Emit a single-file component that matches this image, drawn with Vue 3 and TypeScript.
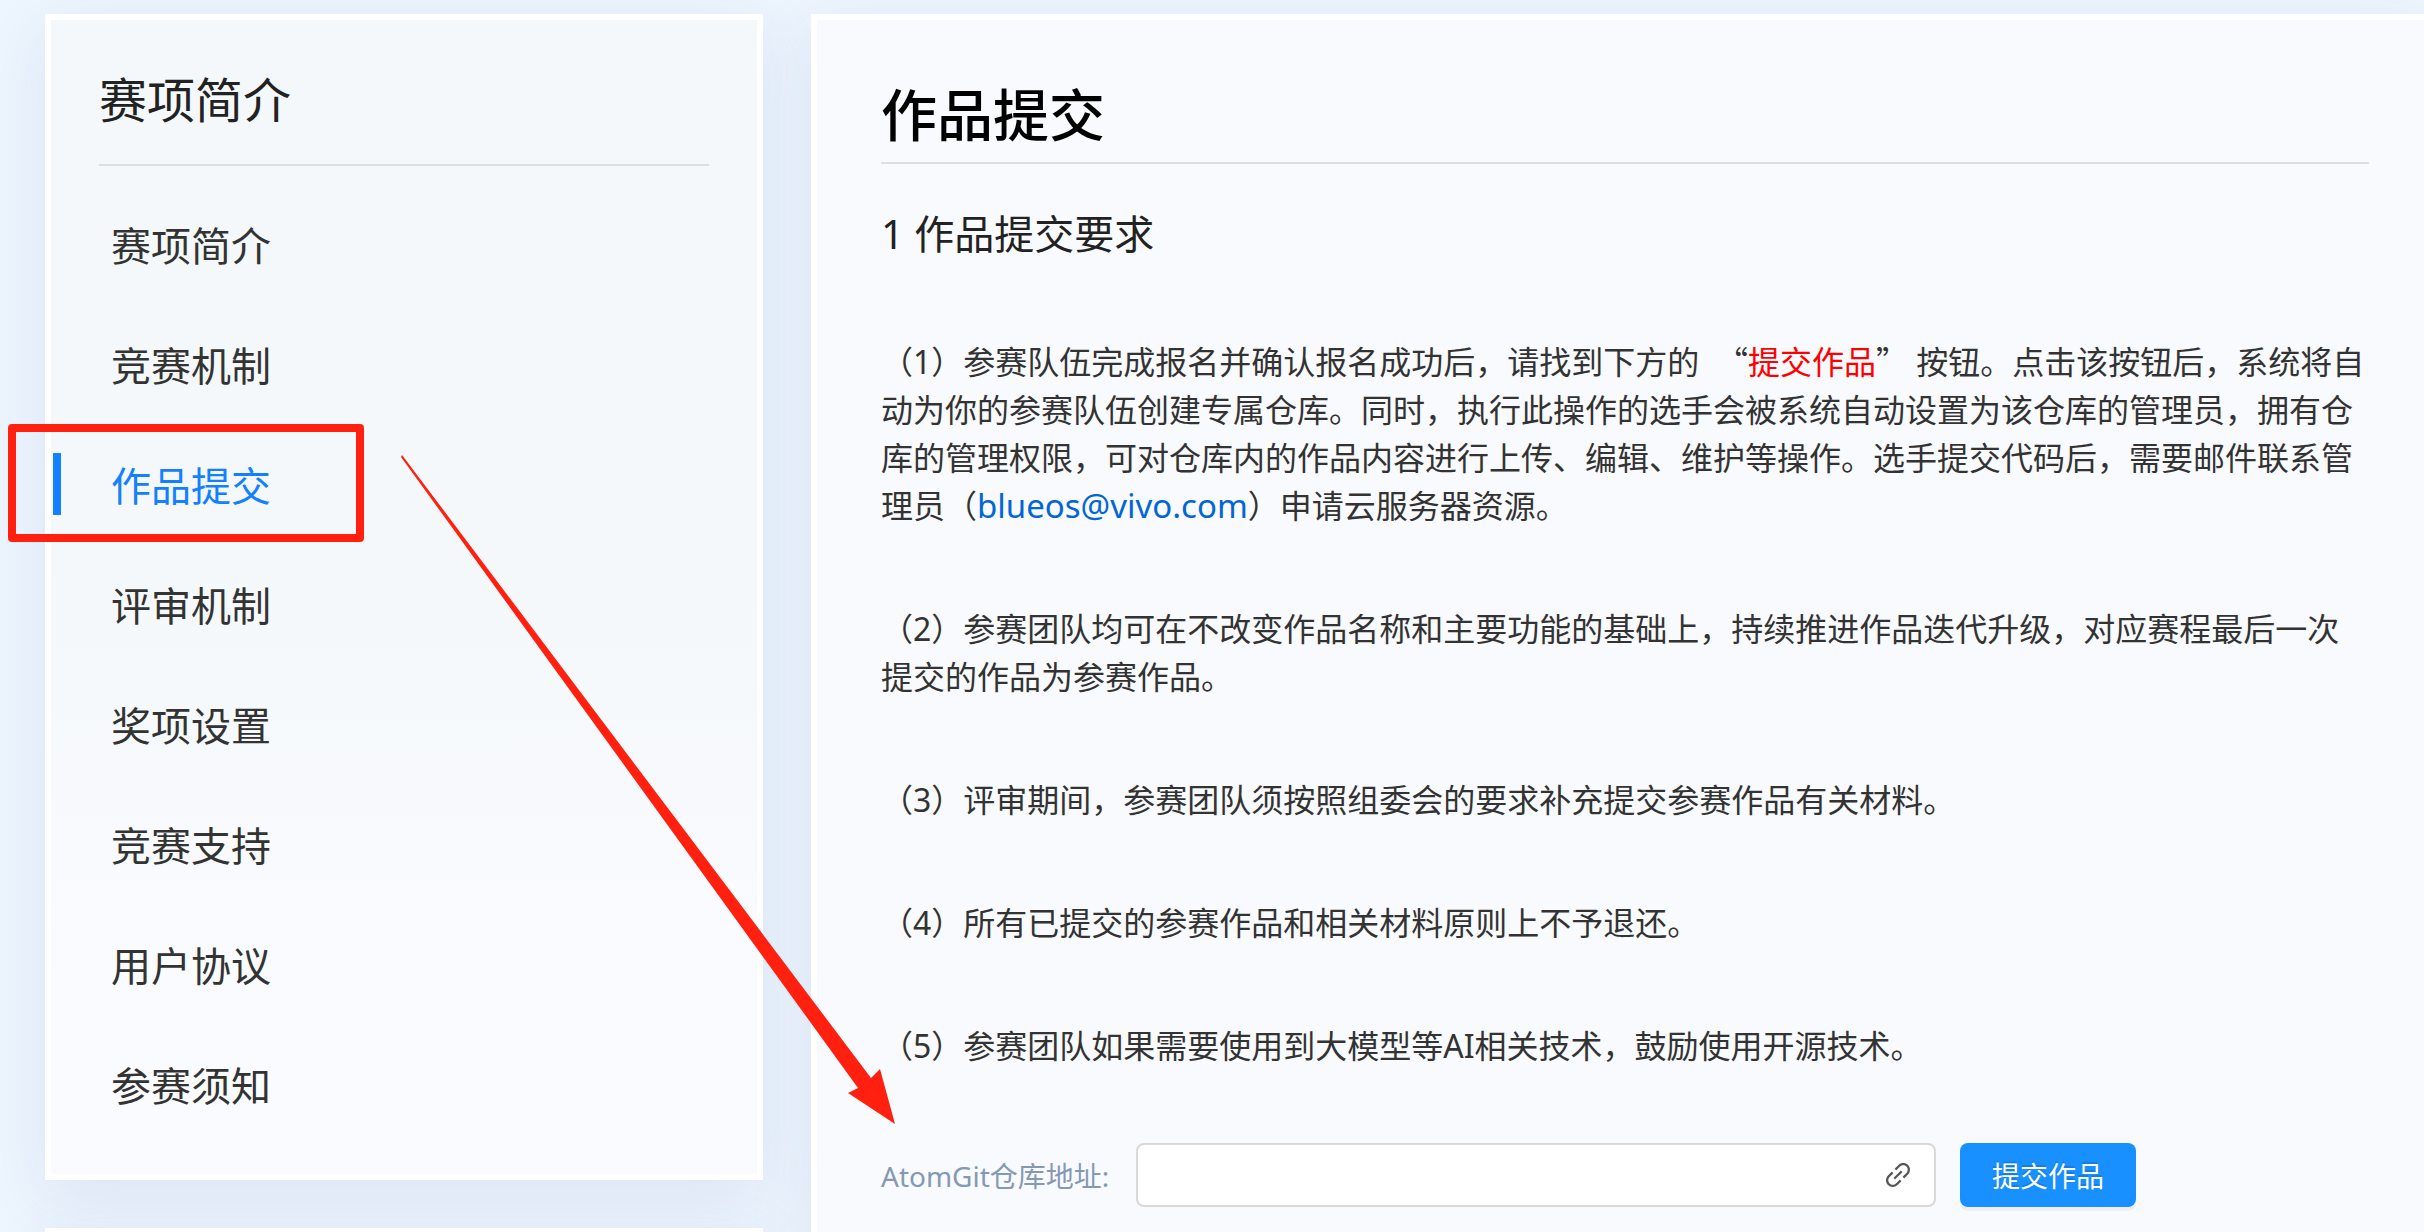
<script setup lang="ts">
import { ref } from 'vue'

const navItems: string[] = [
  '赛项简介',
  '竞赛机制',
  '作品提交',
  '评审机制',
  '奖项设置',
  '竞赛支持',
  '用户协议',
  '参赛须知',
]
const active = ref('作品提交')
const repoUrl = ref('')

const rules: string[] = [
  '（2）参赛团队均可在不改变作品名称和主要功能的基础上，持续推进作品迭代升级，对应赛程最后一次提交的作品为参赛作品。',
  '（3）评审期间，参赛团队须按照组委会的要求补充提交参赛作品有关材料。',
  '（4）所有已提交的参赛作品和相关材料原则上不予退还。',
  '（5）参赛团队如果需要使用到大模型等AI相关技术，鼓励使用开源技术。',
]
</script>

<template>
  <div class="page" lang="zh-CN">
    <aside class="side">
      <section class="card menu">
        <h2 class="menu-title">赛项简介</h2>
        <nav class="nav">
          <a
            v-for="item in navItems"
            :key="item"
            href="#"
            class="nav-item"
            :class="{ active: item === active }"
            @click.prevent="active = item"
            >{{ item }}</a
          >
        </nav>
      </section>
      <section class="card next"></section>
    </aside>

    <main class="card content">
      <h1 class="title">作品提交</h1>
      <h2 class="subtitle">1 作品提交要求</h2>
      <div class="rules">
        <p class="rule">
          （1）参赛队伍完成报名并确认报名成功后，请找到下方的&nbsp; <span class="quote">“</span><span class="red">提交作品</span><span class="quote">”</span> 按钮。点击该按钮后，系统将自动为你的参赛队伍创建专属仓库。同时，执行此操作的选手会被系统自动设置为该仓库的管理员，拥有仓库的管理权限，可对仓库内的作品内容进行上传、编辑、维护等操作。选手提交代码后，需要邮件联系管理员（<a class="mail" href="mailto:blueos@vivo.com">blueos@vivo.com</a>）申请云服务器资源。
        </p>
        <p v-for="rule in rules" :key="rule" class="rule">{{ rule }}</p>
      </div>

      <form class="form" @submit.prevent>
        <label class="label" for="repo">AtomGit仓库地址:</label>
        <div class="field">
          <input id="repo" v-model="repoUrl" class="input" type="text" />
          <svg class="link-icon" viewBox="64 64 896 896" aria-hidden="true">
            <path
              d="M574 665.4a8.03 8.03 0 00-11.3 0L446.5 781.6c-53.8 53.8-144.6 59.5-204 0-59.5-59.5-53.8-150.2 0-204l116.2-116.2c3.1-3.1 3.1-8.2 0-11.3l-39.8-39.8a8.03 8.03 0 00-11.3 0L191.4 526.5c-84.6 84.6-84.6 221.5 0 306s221.5 84.6 306 0l116.2-116.2c3.1-3.1 3.1-8.2 0-11.3L574 665.4zm258.6-474c-84.6-84.6-221.5-84.6-306 0L410.3 307.6a8.03 8.03 0 000 11.3l39.7 39.7c3.1 3.1 8.2 3.1 11.3 0l116.2-116.2c53.8-53.8 144.6-59.5 204 0 59.5 59.5 53.8 150.2 0 204L665.3 562.6a8.03 8.03 0 000 11.3l39.8 39.8c3.1 3.1 8.2 3.1 11.3 0l116.2-116.2c84.5-84.6 84.5-221.5 0-306.1zM610.1 372.3a8.03 8.03 0 00-11.3 0L372.3 598.7a8.03 8.03 0 000 11.3l39.6 39.6c3.1 3.1 8.2 3.1 11.3 0l226.4-226.4c3.1-3.1 3.1-8.2 0-11.3l-39.5-39.6z"
            />
          </svg>
        </div>
        <button class="submit" type="submit">提交作品</button>
      </form>
    </main>

    <!-- Guide marks drawn over the page: frame round the active item, arrow to the form -->
    <div class="frame"></div>
    <svg class="arrow" viewBox="0 0 500 672" aria-hidden="true">
      <path d="M4 1 L473 624 L482 615 L497 670 L450 639 L460 634 L3 3 Z" />
    </svg>
  </div>
</template>

<style>
body {
  margin: 0;
  background: #edf5fe;
}
</style>

<style scoped>
.page {
  position: relative;
  box-sizing: border-box;
  display: flex;
  gap: 48px;
  height: 100vh;
  padding: 14px 0 0 45px;
  overflow: hidden;
  font-family: 'Noto Sans', 'Noto Sans CJK SC', sans-serif;
  color: #333;
  text-spacing-trim: space-all;
}

h1,
h2,
p {
  margin: 0;
  font-weight: 400;
}

.side {
  display: flex;
  flex: 0 0 718px;
  flex-direction: column;
  gap: 48px;
}

.card {
  box-sizing: border-box;
  border: 6px solid #fff;
  box-shadow: 0 16px 60px rgba(55, 90, 140, 0.1);
}

.menu {
  padding: 48px 0 30px;
  background: linear-gradient(#f4f8fb, #f4f8fb 45%, #fafbfe 85%);
}

.menu-title {
  margin: 0 48px;
  padding-bottom: 32px;
  border-bottom: 2px solid #dadfe2;
  font-size: 48px;
  line-height: 64px;
  color: #222;
}

.nav {
  display: flex;
  flex-direction: column;
  padding-top: 18px;
}

.nav-item {
  display: flex;
  align-items: center;
  height: 120px;
  padding-left: 60px;
  font-size: 40px;
  color: #333;
  text-decoration: none;
}

.nav-item.active {
  color: #1280ff;
}

.nav-item.active::before {
  width: 8px;
  height: 62px;
  margin: 0 50px 0 -58px;
  background: #1280ff;
  content: '';
}

.next {
  flex: 0 0 200px;
  background: #f4f8fb;
}

.content {
  flex: 1;
  height: 1400px;
  padding: 58px 55px 60px 64px;
  border-right: 0;
  background: #f9fafd;
}

.title {
  height: 84px;
  border-bottom: 2px solid #dedfe2;
  font-size: 56px;
  font-weight: 500;
  line-height: 72px;
  color: #000;
}

.subtitle {
  margin: 40px 0 74px;
  font-size: 40px;
  line-height: 60px;
  color: #222;
}

.rules {
  display: flex;
  flex-direction: column;
  gap: 75px;
}

.rule {
  font-size: 32px;
  line-height: 48px;
}

.quote {
  font-family: 'Noto Sans CJK SC', sans-serif;
  line-height: 1;
}

.red {
  color: #f00;
}

.mail {
  font-size: 33px;
  line-height: 1;
  color: #0366d6;
  text-decoration: none;
}

.form {
  display: flex;
  align-items: center;
  gap: 24px;
  margin-top: 73px;
}

.label {
  flex: 0 0 231px;
  font-size: 28px;
  color: #8499b4;
}

.field {
  position: relative;
  flex: 0 0 800px;
}

.input {
  display: block;
  box-sizing: border-box;
  width: 100%;
  height: 64px;
  padding: 0 60px 0 22px;
  border: 2px solid #d9d9d9;
  border-radius: 8px;
  background: #fff;
  font: inherit;
  font-size: 28px;
  color: #333;
}

.link-icon {
  position: absolute;
  top: 18px;
  right: 24px;
  width: 28px;
  height: 28px;
  fill: #555;
}

.submit {
  width: 176px;
  height: 64px;
  padding: 0;
  border: 0;
  border-radius: 8px;
  background: #1890ff;
  box-shadow: 0 4px 0 rgba(0, 0, 0, 0.04);
  font-family: inherit;
  font-size: 28px;
  color: #fff;
  text-shadow: 0 -2px 0 rgba(0, 0, 0, 0.12);
}

.frame {
  position: absolute;
  top: 424px;
  left: 8px;
  box-sizing: border-box;
  width: 356px;
  height: 118px;
  border: 8px solid #ff2010;
  border-radius: 4px;
}

.arrow {
  position: absolute;
  top: 454px;
  left: 398px;
  width: 500px;
  height: 672px;
  fill: #ff2010;
  pointer-events: none;
}
</style>
